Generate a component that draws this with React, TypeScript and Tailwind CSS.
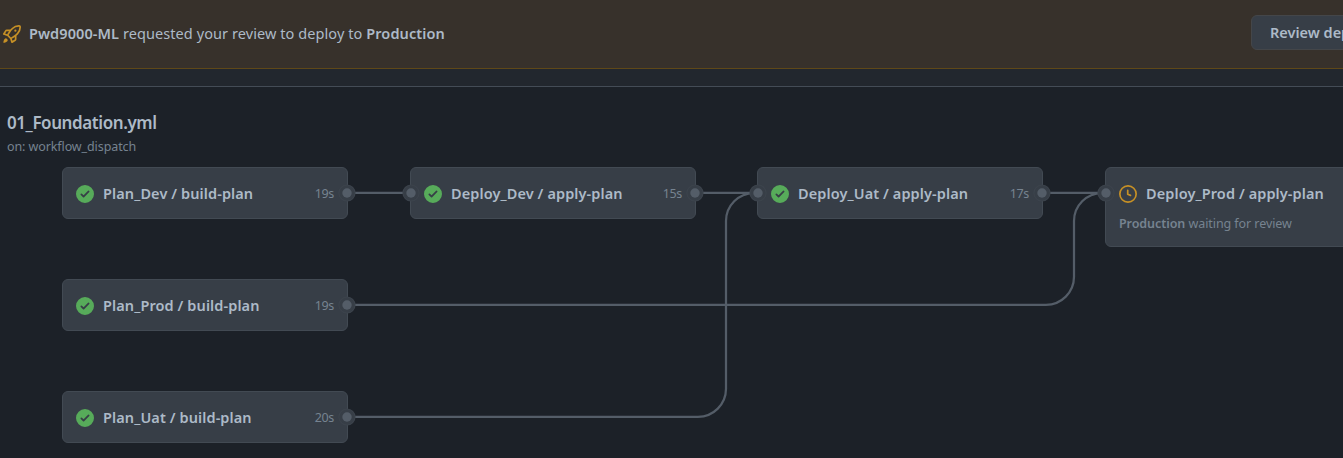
import React from "react";

const ROCKET =
  "M14.064 0h.186C15.216 0 16 .784 16 1.75v.186a8.752 8.752 0 0 1-2.564 6.186l-.458.459c-.314.314-.641.616-.979.904v3.207c0 .608-.315 1.172-.833 1.49l-2.774 1.707a.749.749 0 0 1-1.11-.418l-.954-3.102a1.214 1.214 0 0 1-.145-.125L3.754 9.816a1.218 1.218 0 0 1-.124-.145L.528 8.717a.749.749 0 0 1-.418-1.11l1.71-2.774A1.748 1.748 0 0 1 3.31 4h3.204c.288-.338.59-.665.904-.979l.459-.458A8.749 8.749 0 0 1 14.064 0ZM8.938 3.623h-.002l-.458.458c-.76.76-1.437 1.598-2.02 2.5l-1.5 2.317 2.143 2.143 2.317-1.5c.902-.583 1.74-1.26 2.499-2.02l.459-.458a7.25 7.25 0 0 0 2.123-5.127V1.75a.25.25 0 0 0-.25-.25h-.186a7.249 7.249 0 0 0-5.125 2.123ZM3.56 14.56c-.732.732-2.334 1.045-3.005 1.148a.234.234 0 0 1-.201-.064.234.234 0 0 1-.064-.201c.103-.671.416-2.273 1.15-3.003a1.502 1.502 0 1 1 2.12 2.12Zm6.94-3.935c-.088.06-.177.118-.266.175l-2.35 1.521.548 1.783 1.949-1.2a.25.25 0 0 0 .119-.213ZM3.678 8.116 5.2 5.766c.058-.09.117-.178.176-.266H3.309a.25.25 0 0 0-.213.119l-1.2 1.95ZM12 5a1 1 0 1 1-2 0 1 1 0 0 1 2 0Z";
const CHECK =
  "M8 16A8 8 0 1 1 8 0a8 8 0 0 1 0 16Zm3.78-9.72a.751.751 0 0 0-.018-1.042.751.751 0 0 0-1.042-.018L6.75 9.19 5.28 7.72a.751.751 0 0 0-1.042.018.751.751 0 0 0-.018 1.042l2 2a.75.75 0 0 0 1.06 0Z";
const CLOCK =
  "M8 0a8 8 0 1 1 0 16A8 8 0 0 1 8 0ZM1.5 8a6.5 6.5 0 1 0 13 0 6.5 6.5 0 0 0-13 0Zm7-3.25v2.992l2.028.812a.75.75 0 0 1-.557 1.392l-2.5-1A.751.751 0 0 1 7 8.25v-3.5a.75.75 0 0 1 1.5 0Z";

function Icon({ d, className }: { d: string; className: string }) {
  return (
    <svg viewBox="0 0 16 16" width="18" height="18" fill="currentColor" className={`shrink-0 ${className}`}>
      <path d={d} />
    </svg>
  );
}

type Job = {
  name: string;
  place: string;
  time?: string;
  input?: boolean;
  output?: boolean;
  waiting?: boolean;
};

const JOBS: Job[] = [
  { name: "Plan_Dev / build-plan", time: "19s", place: "left-[62px] top-[80px]", output: true },
  { name: "Deploy_Dev / apply-plan", time: "15s", place: "left-[410px] top-[80px]", input: true, output: true },
  { name: "Deploy_Uat / apply-plan", time: "17s", place: "left-[757px] top-[80px]", input: true, output: true },
  { name: "Deploy_Prod / apply-plan", place: "left-[1105px] top-[80px]", input: true, waiting: true },
  { name: "Plan_Prod / build-plan", time: "19s", place: "left-[62px] top-[192px]", output: true },
  { name: "Plan_Uat / build-plan", time: "20s", place: "left-[62px] top-[304px]", output: true },
];

function Port({ side }: { side: string }) {
  return (
    <svg width="18" height="18" className={`absolute top-[16px] ${side}`}>
      <circle cx="9" cy="9" r="8.6" fill="#3d444d" />
      <circle cx="9" cy="9" r="7.6" fill="#373e47" />
      <circle cx="9" cy="9" r="4.7" fill="#545d68" />
    </svg>
  );
}

function JobCard({ job }: { job: Job }) {
  return (
    <div
      className={`absolute ${job.place} w-[286px] rounded-md border border-[#424a53] bg-[#373e47] px-[13px] ${
        job.waiting ? "h-[80px]" : "h-[52px]"
      }`}
    >
      <div className="flex h-[51px] items-center">
        {job.waiting ? (
          <Icon d={CLOCK} className="text-[#c69026]" />
        ) : (
          <Icon d={CHECK} className="text-[#57ab5a]" />
        )}
        <span className="ml-[9px] grow text-[14.5px] font-semibold tracking-[0.1px]">{job.name}</span>
        {job.time && (
          <span className="mt-[2px] text-[12.5px] tracking-[-0.35px] text-[#768390]">{job.time}</span>
        )}
      </div>
      {job.waiting && (
        <p className="-mt-[5px] text-[12.5px] leading-5 tracking-[-0.07px] text-[#768390]">
          <b className="font-semibold">Production</b> waiting for review
        </p>
      )}
      {job.input && <Port side="-left-[9px]" />}
      {job.output && <Port side="-right-[9px]" />}
    </div>
  );
}

export default function App() {
  return (
    <div
      className="flex h-[458px] w-full flex-col overflow-hidden bg-[#22272e] text-[#adbac7]"
      style={{ fontFamily: '"Noto Sans", "Open Sans", sans-serif' }}
    >
      <header className="flex h-[69px] shrink-0 items-center border-b border-[#5f4818] bg-[#37312b] pl-[3px]">
        <Icon d={ROCKET} className="text-[#c69026]" />
        <p className="ml-2 grow whitespace-nowrap text-[14.5px] tracking-[0.08px]">
          <b className="font-semibold">Pwd9000-ML</b> requested your review to deploy to{" "}
          <b className="font-semibold">Production</b>
        </p>
        <button className="-mr-[80px] mb-[3px] h-[35px] w-[172px] shrink-0 whitespace-nowrap rounded-md border border-[#444649] bg-[#373e47] px-[18px] text-left text-[14.5px] font-semibold">
          Review deployments
        </button>
      </header>
      <main className="relative mt-[17px] grow border-t border-[#444c56] bg-[#1c2128]">
        <div className="pl-[7px] pt-[22px]">
          <h1 className="text-[17px] font-semibold leading-[28px] tracking-[-0.42px]">01_Foundation.yml</h1>
          <p className="text-[12.5px] leading-[20px] tracking-[-0.1px] text-[#768390]">on: workflow_dispatch</p>
        </div>
        <svg
          className="absolute left-0 top-0"
          width="1343"
          height="371"
          fill="none"
          stroke="#545d68"
          strokeWidth="2.25"
        >
          <path d="M348 105.8H410M696 105.8H757M1043 105.8H1105" />
          <path d="M348 217.8H1046A28 28 0 0 0 1074 189.8V134A28 28 0 0 1 1102 106" />
          <path d="M348 329.8H698A28 28 0 0 0 726 301.8V134A28 28 0 0 1 754 106" />
        </svg>
        {JOBS.map((job) => (
          <JobCard key={job.name} job={job} />
        ))}
      </main>
    </div>
  );
}
